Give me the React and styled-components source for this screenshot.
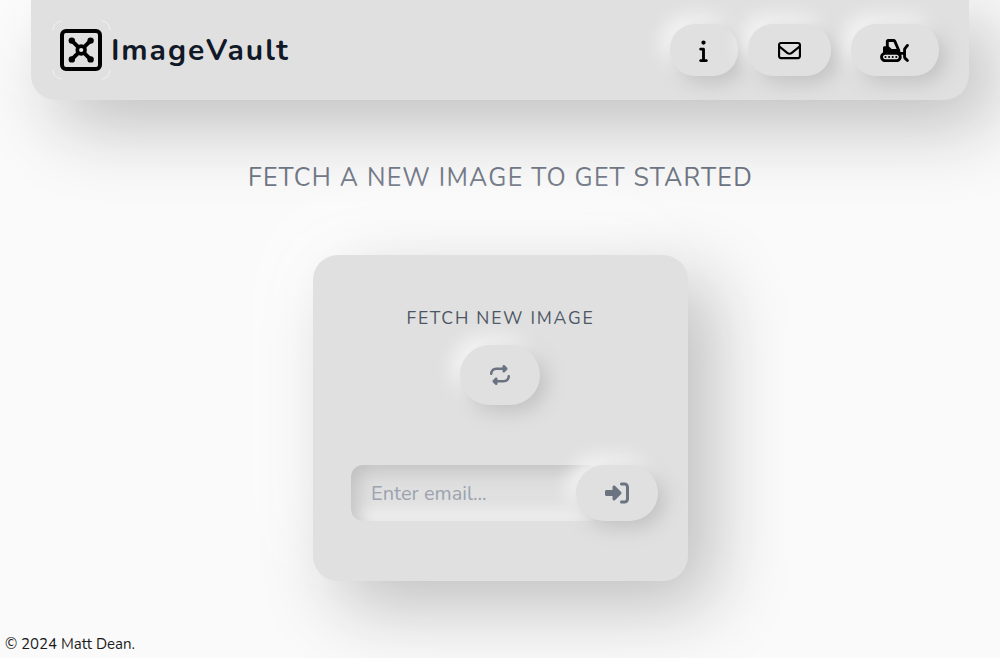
import React from "react";
import styled, { createGlobalStyle } from "styled-components";
import { FaInfo, FaRegEnvelope, FaSnowplow, FaRepeat, FaRightToBracket } from "react-icons/fa6";

const GlobalStyle = createGlobalStyle`
  * { box-sizing: border-box; }
  body {
    margin: 0;
    background: #fafafa;
    font-family: Nunito, Lato, "Liberation Sans", sans-serif;
    overflow: hidden;
  }
`;

const Page = styled.div`
  height: 658px;
  display: flex;
  flex-direction: column;
  align-items: center;
`;

const Header = styled.header`
  width: 938px;
  height: 100px;
  flex: none;
  display: flex;
  align-items: center;
  justify-content: space-between;
  padding: 0 30px 0 21px;
  background: #e0e0e0;
  border-radius: 0 0 25px 25px;
  box-shadow: 25px 25px 75px #bebebe, -25px -25px 75px #ffffff;
`;

const Brand = styled.div`
  display: flex;
  align-items: center;
`;

const BrandName = styled.h1`
  margin: 1px 0 0 -1px;
  font-size: 30px;
  line-height: 36px;
  font-weight: 700;
  letter-spacing: 1.9px;
  color: #111827;
`;

const Nav = styled.nav`
  display: flex;
`;

const SoftButton = styled.button`
  display: flex;
  align-items: center;
  justify-content: center;
  flex: none;
  width: ${(p) => p.$w}px;
  height: ${(p) => p.$h}px;
  margin: 0 0 0 ${(p) => p.$gap || 0}px;
  padding: ${(p) => p.$pad || "0"};
  border: 0;
  border-radius: ${(p) => p.$r || 25}px;
  background: #e0e0e0;
  color: ${(p) => (p.$muted ? "#6b7280" : "#000")};
  box-shadow: 6px 6px 20px #bebebe, -6px -6px 20px #ffffff;
`;

const PlowIcon = styled(FaSnowplow)`
  width: 29px;
  height: 23px;
`;

const Title = styled.h2`
  margin: 60px 0 0;
  font-size: 25px;
  line-height: 36px;
  font-weight: 400;
  letter-spacing: 1.25px;
  padding-left: 1px;
  color: #6b7280;
  white-space: nowrap;
`;

const Card = styled.main`
  width: 375px;
  height: 326px;
  flex: none;
  margin: 59px 0 0 1px;
  padding: 49px 30px 0 38px;
  display: flex;
  flex-direction: column;
  background: #e0e0e0;
  border-radius: 25px;
  box-shadow: 25px 25px 75px #bebebe, -25px -25px 75px #ffffff;
`;

const FetchGroup = styled.section`
  display: flex;
  flex-direction: column;
  align-items: center;
  gap: 13px;
  margin-right: 9px;
`;

const CardLabel = styled.h3`
  margin: 0;
  font-size: 17.6px;
  line-height: 28px;
  font-weight: 400;
  letter-spacing: 1.76px;
  padding-left: 1px;
  color: #4b5563;
  white-space: nowrap;
`;

const EmailForm = styled.div`
  display: flex;
  height: 56px;
  margin-top: 60px;
`;

const EmailInput = styled.input`
  width: 250px;
  height: 56px;
  margin-right: -25px;
  padding: 0 20px;
  border: 0;
  border-radius: 12px;
  outline: 0;
  background: #e0e0e0;
  box-shadow: inset 6px 6px 18px #bebebe, inset -6px -6px 18px #ffffff;
  font-family: inherit;
  font-size: 20px;
  &::placeholder { color: #9ca3af; opacity: 1; }
`;

const Footer = styled.footer`
  align-self: flex-start;
  margin-top: auto;
  padding: 0 5px 4px;
  font-size: 15px;
  line-height: 20px;
  color: #1a1a1a;
`;

function VaultLogo() {
  return (
    <svg width="60" height="60" viewBox="0 0 60 60" fill="none">
      <path d="M.8 10Q1.5 2 10 1M50 1Q57.500 2 58 10M58 50Q57.500 58 50 59M10 59Q1.500 58 .8 50" stroke="#f2f2f2" />
      <rect x="10" y="11" width="38" height="38" rx="4" stroke="#000" strokeWidth="4" />
      <path d="m19.800 20.600 18.800 18.800m0-18.800-18.800 18.800" stroke="#000" strokeWidth="4" />
      <g fill="#000">
        <circle cx="19.800" cy="20.600" r="3.200" />
        <circle cx="38.600" cy="20.600" r="3.200" />
        <circle cx="19.800" cy="39.400" r="3.200" />
        <circle cx="38.600" cy="39.400" r="3.200" />
        <circle cx="29.200" cy="30" r="5.700" />
      </g>
      <circle cx="29.200" cy="30" r="2.100" fill="#e8e8e8" />
    </svg>
  );
}

export default function App() {
  return (
    <>
      <GlobalStyle />
      <Page>
        <Header>
          <Brand>
            <VaultLogo />
            <BrandName>ImageVault</BrandName>
          </Brand>
          <Nav>
            <SoftButton $w={68} $h={52} $pad="0 1px 0 0" aria-label="About"><FaInfo size={23} /></SoftButton>
            <SoftButton $w={83} $h={52} $gap={10} aria-label="Contact"><FaRegEnvelope size={23} /></SoftButton>
            <SoftButton $w={88} $h={52} $gap={20} $pad="0 1px 0 0" aria-label="Projects"><PlowIcon /></SoftButton>
          </Nav>
        </Header>
        <Title>FETCH A NEW IMAGE TO GET STARTED</Title>
        <Card>
          <FetchGroup>
            <CardLabel>FETCH NEW IMAGE</CardLabel>
            <SoftButton $w={80} $h={60} $r={30} $pad="0 0 1px" $muted aria-label="Fetch"><FaRepeat size={20} /></SoftButton>
          </FetchGroup>
          <EmailForm>
            <EmailInput placeholder="Enter email..." />
            <SoftButton $w={82} $h={56} $r={28} $muted aria-label="Submit"><FaRightToBracket size={24} /></SoftButton>
          </EmailForm>
        </Card>
        <Footer>© 2024 Matt Dean.</Footer>
      </Page>
    </>
  );
}
